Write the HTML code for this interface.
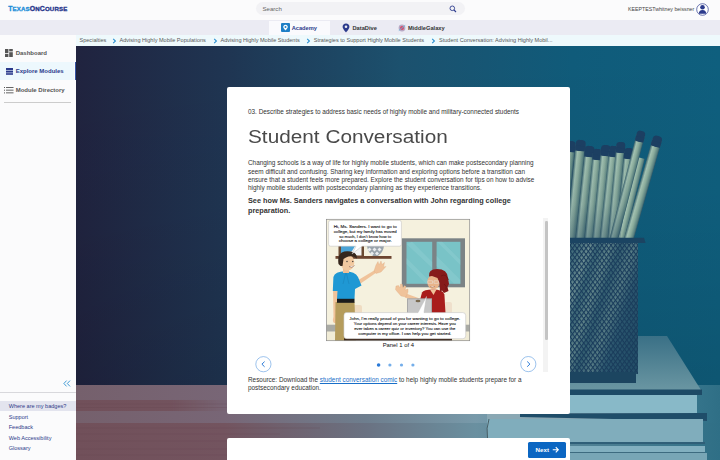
<!DOCTYPE html>
<html><head><meta charset="utf-8">
<style>
*{margin:0;padding:0;box-sizing:border-box}
html,body{width:720px;height:460px;overflow:hidden;background:#fff;font-family:"Liberation Sans",sans-serif}
.abs{position:absolute}
.t{position:absolute;white-space:nowrap}
#top{left:0;top:0;width:720px;height:20px;background:#fbfbfc}
#nav{left:0;top:20px;width:720px;height:15px;background:#ebebf3}
#side{left:0;top:35px;width:76px;height:425px;background:#fbfbfc}
#crumb{left:76px;top:35px;width:644px;height:10.8px;background:#eef9fc}
.card{background:#fff;border-radius:2px}
.bc{font-size:5.55px;color:#585858;line-height:8px;top:36.2px}
.chev{position:absolute;top:38.3px;width:3.2px;height:3.2px;border-right:1px solid #2a8fd0;border-top:1px solid #2a8fd0;transform:rotate(45deg)}
.sb{font-size:6px;font-weight:bold;color:#555;line-height:8px;left:15.7px}
.ft{font-size:5.55px;color:#2d3a8a;line-height:8px;left:8.7px}
.p{font-size:6.4px;color:#333;line-height:8.4px;left:248px}
</style></head><body>
<svg class="abs" style="left:0;top:0" width="720" height="460" viewBox="0 0 720 460">
<defs>
<linearGradient id="wall" x1="76" y1="0" x2="720" y2="0" gradientUnits="userSpaceOnUse">
<stop offset="0" stop-color="#20233f"/>
<stop offset="0.234" stop-color="#1f3552"/>
<stop offset="0.504" stop-color="#1c516e"/>
<stop offset="0.77" stop-color="#105b7a"/>
<stop offset="1" stop-color="#0f5f7e"/>
</linearGradient>
<linearGradient id="wallv" x1="0" y1="46" x2="0" y2="385" gradientUnits="userSpaceOnUse">
<stop offset="0" stop-color="#000" stop-opacity="0"/>
<stop offset="0.5" stop-color="#000" stop-opacity="0.03"/>
<stop offset="1" stop-color="#000" stop-opacity="0.1"/>
</linearGradient>
<linearGradient id="table" x1="76" y1="0" x2="720" y2="0" gradientUnits="userSpaceOnUse">
<stop offset="0" stop-color="#71505a"/>
<stop offset="0.23" stop-color="#73545f"/>
<stop offset="0.45" stop-color="#6a7282"/>
<stop offset="0.62" stop-color="#6a90a0"/>
<stop offset="1" stop-color="#2f6f86"/>
</linearGradient>
<linearGradient id="tableL" x1="76" y1="0" x2="720" y2="0" gradientUnits="userSpaceOnUse">
<stop offset="0" stop-color="#75606c"/>
<stop offset="0.23" stop-color="#786676"/>
<stop offset="0.45" stop-color="#6e7e8e"/>
<stop offset="0.62" stop-color="#789aaa"/>
<stop offset="0.8" stop-color="#4f8aa0"/>
<stop offset="1" stop-color="#2f6f86"/>
</linearGradient>

<linearGradient id="booktop" x1="0" y1="336" x2="0" y2="390" gradientUnits="userSpaceOnUse">
<stop offset="0" stop-color="#3a7086"/>
<stop offset="1" stop-color="#6a96a2"/>
</linearGradient>
</defs>
<rect x="76" y="46" width="644" height="340" fill="url(#wall)"/>
<rect x="76" y="46" width="644" height="340" fill="url(#wallv)"/>
<rect x="76" y="385" width="644" height="75" fill="url(#table)"/>
<rect x="76" y="385" width="644" height="15" fill="url(#tableL)"/>
<rect x="76" y="411" width="644" height="12" fill="url(#tableL)"/>
<linearGradient id="fadeL" x1="170" y1="0" x2="230" y2="0" gradientUnits="userSpaceOnUse"><stop offset="0" stop-color="#fff" stop-opacity="0"/><stop offset="1" stop-color="#fff" stop-opacity="1"/></linearGradient>
<mask id="mfade"><rect x="76" y="398" width="644" height="15" fill="url(#fadeL)"/></mask>
<rect x="76" y="399" width="644" height="13" fill="url(#tableL)" mask="url(#mfade)"/>
<g stroke="#5e3e4a" stroke-width="0.6" opacity="0.35">
<line x1="76" y1="404" x2="300" y2="404"/><line x1="76" y1="407.5" x2="260" y2="407.5"/>
<line x1="76" y1="428" x2="320" y2="428"/><line x1="76" y1="434" x2="280" y2="434"/><line x1="76" y1="441" x2="320" y2="441"/><line x1="76" y1="449" x2="300" y2="449"/><line x1="76" y1="455" x2="260" y2="455"/>
</g>
<!-- books -->
<polygon points="520,336 667,336 701,390 520,390" fill="url(#booktop)"/>
<rect x="520" y="389.5" width="182" height="5.5" fill="#1d4a66"/>
<rect x="520" y="395" width="177" height="18" fill="#88b9c8"/>
<rect x="487" y="413" width="220" height="8" fill="#8aa8b4"/><polygon points="520,413.4 707,413 707,421 520,417" fill="#1f4d69"/>
<rect x="487" y="419" width="216" height="23" fill="#80adbc"/><path d="M489 419 Q486 428 487.5 438" stroke="#3a4a50" stroke-width="0.8" fill="none"/>
<rect x="487" y="442" width="218" height="2" fill="#2f5f78"/>
<rect x="487" y="446" width="218" height="6" fill="#82b0c0"/><rect x="487" y="452" width="218" height="1" fill="#3d6b80"/><rect x="487" y="453" width="220" height="7" fill="#78a6b6"/>
<!-- pencils -->
<defs><linearGradient id="pen" x1="0" y1="0" x2="1" y2="0"><stop offset="0" stop-color="#3c646e"/><stop offset="0.25" stop-color="#a2c1b1"/><stop offset="0.55" stop-color="#8aab9b"/><stop offset="0.85" stop-color="#5b8280"/><stop offset="1" stop-color="#2f5868"/></linearGradient>
<linearGradient id="penshade" x1="0" y1="150" x2="0" y2="240" gradientUnits="userSpaceOnUse"><stop offset="0" stop-color="#1a3d5c" stop-opacity="0"/><stop offset="0.6" stop-color="#1a3d5c" stop-opacity="0.1"/><stop offset="1" stop-color="#1a3d5c" stop-opacity="0.35"/></linearGradient></defs>
<polygon points="560,150 633,150 620,240 560,240" fill="#234c66"/>
<g transform="translate(571,142) rotate(6.4)"><rect x="-5.0" y="3" width="10" height="99" fill="url(#pen)"/><rect x="-5.0" y="-1" width="10" height="11" rx="4.0" fill="#1c3f62"/><rect x="-5.0" y="5" width="10" height="5" fill="#1c3f62"/></g>
<g transform="translate(581,141) rotate(5.8)"><rect x="-5.0" y="3" width="10" height="100" fill="url(#pen)"/><rect x="-5.0" y="-1" width="10" height="11" rx="4.0" fill="#1c3f62"/><rect x="-5.0" y="5" width="10" height="5" fill="#1c3f62"/></g>
<g transform="translate(590,147) rotate(6.1)"><rect x="-4.75" y="3" width="9.5" height="94" fill="url(#pen)"/><rect x="-4.75" y="-1" width="9.5" height="11" rx="3.75" fill="#1c3f62"/><rect x="-4.75" y="5" width="9.5" height="5" fill="#1c3f62"/></g>
<g transform="translate(598,150) rotate(5.7)"><rect x="-4.75" y="3" width="9.5" height="90" fill="url(#pen)"/><rect x="-4.75" y="-1" width="9.5" height="11" rx="3.75" fill="#1c3f62"/><rect x="-4.75" y="5" width="9.5" height="5" fill="#1c3f62"/></g>
<g transform="translate(606,146) rotate(5.5)"><rect x="-4.75" y="3" width="9.5" height="94" fill="url(#pen)"/><rect x="-4.75" y="-1" width="9.5" height="11" rx="3.75" fill="#1c3f62"/><rect x="-4.75" y="5" width="9.5" height="5" fill="#1c3f62"/></g>
<g transform="translate(614,147) rotate(6.1)"><rect x="-4.5" y="3" width="9" height="94" fill="url(#pen)"/><rect x="-4.5" y="-1" width="9" height="11" rx="3.5" fill="#1c3f62"/><rect x="-4.5" y="5" width="9" height="5" fill="#1c3f62"/></g>
<g transform="translate(621,143) rotate(5.3)"><rect x="-4.5" y="3" width="9" height="97" fill="url(#pen)"/><rect x="-4.5" y="-1" width="9" height="11" rx="3.5" fill="#1c3f62"/><rect x="-4.5" y="5" width="9" height="5" fill="#1c3f62"/></g>
<g transform="translate(629,149) rotate(5.6)"><rect x="-4.5" y="3" width="9" height="91" fill="url(#pen)"/><rect x="-4.5" y="-1" width="9" height="11" rx="3.5" fill="#1c3f62"/><rect x="-4.5" y="5" width="9" height="5" fill="#1c3f62"/></g>
<g transform="translate(641,158) rotate(14)"><rect x="-4" y="0" width="8" height="82" fill="url(#pen)"/></g>
<g transform="translate(641.5,132) rotate(14.5)"><rect x="-4.25" y="3" width="8.5" height="110" fill="url(#pen)"/><rect x="-4.25" y="-1" width="8.5" height="11" rx="3.25" fill="#1c3f62"/><rect x="-4.25" y="5" width="8.5" height="5" fill="#1c3f62"/></g>
<g transform="translate(658,137) rotate(16.0)"><rect x="-4.75" y="3" width="9.5" height="105" fill="url(#pen)"/><rect x="-4.75" y="-1" width="9.5" height="11" rx="3.75" fill="#1c3f62"/><rect x="-4.75" y="5" width="9.5" height="5" fill="#1c3f62"/></g>
<polygon points="555,150 633,150 620,240 555,240" fill="url(#penshade)"/>
<!-- cup -->
<defs>
<linearGradient id="inside" x1="540" y1="290" x2="640" y2="325" gradientUnits="userSpaceOnUse">
<stop offset="0" stop-color="#3a6c7a"/>
<stop offset="0.2" stop-color="#5d8c90"/>
<stop offset="0.3" stop-color="#9cbcb0"/>
<stop offset="0.38" stop-color="#4d7e86"/>
<stop offset="0.48" stop-color="#8aaea4"/>
<stop offset="0.58" stop-color="#3f6f7c"/>
<stop offset="0.7" stop-color="#7aa09c"/>
<stop offset="0.82" stop-color="#36667a"/>
<stop offset="1" stop-color="#2a5a70"/>
</linearGradient>
<pattern id="mesh" width="3.2" height="3.2" patternUnits="userSpaceOnUse" patternTransform="scale(1,1.35) rotate(45)">
<path d="M0 0.5H3.2M0.5 0V3.2" stroke="#1a3d5c" stroke-width="1"/>
</pattern>
</defs>
<rect x="560" y="242" width="78" height="132" fill="url(#inside)"/>
<rect x="560" y="242" width="78" height="132" fill="url(#mesh)"/>
<rect x="560" y="242" width="78" height="132" fill="#1a3d5c" opacity="0.35"/>
<rect x="560" y="372" width="76" height="11" fill="#1c4560"/>
<polygon points="560,237.8 644,237.8 645.6,243 560,243" fill="#1b4462"/>
</svg>
<div id="top" class="abs"></div>
<div id="nav" class="abs"></div>
<div id="side" class="abs"></div>
<div id="crumb" class="abs"></div>
<!-- logo -->
<div class="t" style="left:8.2px;top:1.9px;line-height:8px;font-weight:bold;letter-spacing:0.15px;-webkit-text-stroke:0.3px currentColor">
<span style="color:#1a8cd8;-webkit-text-stroke-color:#1a8cd8;font-size:6.9px">T</span><span style="color:#1a8cd8;-webkit-text-stroke-color:#1a8cd8;font-size:6.1px">EXAS</span><span style="color:#24338a;-webkit-text-stroke-color:#24338a;font-size:6.9px">O</span><span style="color:#24338a;-webkit-text-stroke-color:#24338a;font-size:6.1px">N</span><span style="color:#24338a;-webkit-text-stroke-color:#24338a;font-size:6.9px">C</span><span style="color:#24338a;-webkit-text-stroke-color:#24338a;font-size:6.1px">OURSE</span>
</div>
<!-- search -->
<div class="abs" style="left:256px;top:2.3px;width:209px;height:13px;border-radius:6.5px;background:#f2f2f5"></div>
<div class="t" style="left:262.5px;top:5px;font-size:6.1px;line-height:8px;color:#666">Search</div>
<svg class="abs" style="left:449px;top:5px" width="8" height="8" viewBox="0 0 8 8"><circle cx="3.3" cy="3.3" r="2.3" fill="none" stroke="#2f3d8f" stroke-width="0.9"/><line x1="5" y1="5" x2="7" y2="7" stroke="#2f3d8f" stroke-width="1.1"/></svg>
<!-- user -->
<div class="t" style="left:628px;top:5.2px;font-size:5.25px;line-height:8px;color:#444">KEEPTESTwhitney beissner</div>
<svg class="abs" style="left:696px;top:3px" width="13" height="13" viewBox="0 0 13 13"><circle cx="6.5" cy="6.5" r="5.8" fill="#fff" stroke="#2b3a8c" stroke-width="0.7"/><circle cx="6.5" cy="4.3" r="2.3" fill="#2b3a8c"/><path d="M2.8 10.8 Q2.8 7 6.5 7 Q10.2 7 10.2 10.8 Z" fill="#2b3a8c"/></svg>
<!-- nav tabs -->
<div class="abs" style="left:268.6px;top:21.4px;width:61.2px;height:13.6px;background:#fafafd"></div>
<svg class="abs" style="left:281px;top:23px" width="9" height="9" viewBox="0 0 9 9"><rect width="9" height="9" rx="1" fill="#1f7fc6"/><path d="M4.5 1.8 C3 1.8 2.2 2.9 2.2 4 C2.2 5.3 4.5 7.4 4.5 7.4 C4.5 7.4 6.8 5.3 6.8 4 C6.8 2.9 6 1.8 4.5 1.8 Z" fill="#fff"/><circle cx="4.5" cy="4" r="1" fill="#1f7fc6"/></svg>
<div class="t" style="left:291.7px;top:23.5px;font-size:5.7px;font-weight:bold;line-height:8px;color:#2b3a8c">Academy</div>
<svg class="abs" style="left:342px;top:22.5px" width="8" height="10" viewBox="0 0 8 10"><path d="M4 0.5 C1.9 0.5 0.6 2 0.6 3.8 C0.6 6 4 9.5 4 9.5 C4 9.5 7.4 6 7.4 3.8 C7.4 2 6.1 0.5 4 0.5 Z" fill="#2b3a8c"/><circle cx="4" cy="3.8" r="1.3" fill="#ebebf3"/></svg>
<div class="t" style="left:352.5px;top:23.5px;font-size:5.7px;font-weight:bold;line-height:8px;color:#333">DataDive</div>
<svg class="abs" style="left:398px;top:23.5px" width="8" height="8" viewBox="0 0 8 8"><circle cx="4" cy="4" r="3.4" fill="#b9a9c4"/><circle cx="4" cy="4" r="2" fill="#d84a6a"/><path d="M0.8 6.5 L7.2 1.5" stroke="#5ab8e0" stroke-width="0.8"/></svg>
<div class="t" style="left:408px;top:23.5px;font-size:5.7px;font-weight:bold;line-height:8px;color:#333">MiddleGalaxy</div>
<!-- breadcrumbs -->
<div class="t bc" style="left:79.5px">Specialties</div>
<svg class="abs" style="left:112.0px;top:38px" width="5" height="6" viewBox="0 0 5 6"><path d="M1.2 0.9 L3.4 3 L1.2 5.1" fill="none" stroke="#2a8fd0" stroke-width="1.1"/></svg>
<div class="t bc" style="left:119.5px">Advising Highly Mobile Populations</div>
<svg class="abs" style="left:212.5px;top:38px" width="5" height="6" viewBox="0 0 5 6"><path d="M1.2 0.9 L3.4 3 L1.2 5.1" fill="none" stroke="#2a8fd0" stroke-width="1.1"/></svg>
<div class="t bc" style="left:220.5px">Advising Highly Mobile Students</div>
<svg class="abs" style="left:306.0px;top:38px" width="5" height="6" viewBox="0 0 5 6"><path d="M1.2 0.9 L3.4 3 L1.2 5.1" fill="none" stroke="#2a8fd0" stroke-width="1.1"/></svg>
<div class="t bc" style="left:313.75px">Strategies to Support Highly Mobile Students</div>
<svg class="abs" style="left:431.0px;top:38px" width="5" height="6" viewBox="0 0 5 6"><path d="M1.2 0.9 L3.4 3 L1.2 5.1" fill="none" stroke="#2a8fd0" stroke-width="1.1"/></svg>
<div class="t bc" style="left:439px">Student Conversation: Advising Highly Mobil...</div>
<!-- sidebar -->
<div class="abs" style="left:0;top:62px;width:74px;height:18.2px;background:#edf8fd"></div>
<div class="abs" style="left:75px;top:62px;width:1.2px;height:18.2px;background:#3656a6"></div>
<svg class="abs" style="left:5px;top:49px" width="8" height="8" viewBox="0 0 8 8"><g fill="#555"><rect x="0" y="0" width="3.4" height="4.2"/><rect x="4.2" y="0" width="3.6" height="2.4"/><rect x="0" y="5" width="3.4" height="3"/><rect x="4.2" y="3.2" width="3.6" height="4.8"/></g></svg>
<div class="t sb" style="top:49px">Dashboard</div>
<svg class="abs" style="left:5.5px;top:68px" width="8" height="7" viewBox="0 0 8 7"><g fill="#2b3a8c"><rect x="0" y="0" width="7" height="2"/><rect x="0" y="2.6" width="7" height="2"/><rect x="0" y="5.2" width="7" height="1.6"/></g></svg>
<div class="t sb" style="top:67.3px;color:#2b3a8c">Explore Modules</div>
<svg class="abs" style="left:4px;top:86.5px" width="10" height="7" viewBox="0 0 10 7"><g fill="#555"><rect x="0" y="0" width="1" height="1"/><rect x="2" y="0" width="7.5" height="0.9"/><rect x="0" y="2.7" width="1" height="1"/><rect x="2" y="2.7" width="7.5" height="0.9"/><rect x="0" y="5.4" width="1" height="1"/><rect x="2" y="5.4" width="7.5" height="0.9"/></g></svg>
<div class="t sb" style="top:85.6px">Module Directory</div>
<div class="abs" style="left:4.3px;top:102px;width:66.7px;height:0.6px;background:#ccc"></div>
<svg class="abs" style="left:62.5px;top:379.5px" width="8" height="7" viewBox="0 0 8 7"><path d="M3.6 0.6 L0.9 3.5 L3.6 6.4 M7 0.6 L4.3 3.5 L7 6.4" fill="none" stroke="#2a8fd0" stroke-width="0.9"/></svg>
<div class="abs" style="left:0;top:392.3px;width:76px;height:0.6px;background:#d8d8dc"></div>
<div class="abs" style="left:0;top:400.6px;width:76px;height:10px;background:#e3e4ee"></div>
<div class="t ft" style="top:401.6px">Where are my badges?</div>
<div class="t ft" style="top:412.5px">Support</div>
<div class="t ft" style="top:423px">Feedback</div>
<div class="t ft" style="top:433.6px">Web Accessibility</div>
<div class="t ft" style="top:444.3px">Glossary</div>
<div class="abs card" style="left:227px;top:86.5px;width:343px;height:327px"></div>
<div class="abs card" style="left:227px;top:438px;width:343px;height:30px"></div>
<div class="t" style="left:248px;top:107.8px;font-size:6.4px;line-height:8px;color:#333">03. Describe strategies to address basic needs of highly mobile and military-connected students</div>
<div class="t" style="left:247.6px;top:124.7px;font-size:17.5px;line-height:24px;color:#4a4a4a;transform:scaleX(1.187);transform-origin:0 0">Student Conversation</div>
<div class="t p" style="top:158.9px">Changing schools is a way of life for highly mobile students, which can make postsecondary planning</div>
<div class="t p" style="top:167.6px">seem difficult and confusing. Sharing key information and exploring options before a transition can</div>
<div class="t p" style="top:175.5px">ensure that a student feels more prepared. Explore the student conversation for tips on how to advise</div>
<div class="t p" style="top:183.8px">highly mobile students with postsecondary planning as they experience transitions.</div>
<div class="t" style="left:248px;top:195.9px;font-size:7.3px;font-weight:bold;line-height:9.7px;color:#333">See how Ms. Sanders navigates a conversation with John regarding college</div>
<div class="t" style="left:248px;top:205.6px;font-size:7.3px;font-weight:bold;line-height:9.7px;color:#333">preparation.</div>
<!-- scrollbar -->
<div class="abs" style="left:543.4px;top:218px;width:5px;height:153.5px;background:#f3f3f3"></div>
<div class="abs" style="left:545px;top:220.6px;width:2.7px;height:119px;background:#c4c4c4;border-radius:1.3px"></div>
<!-- carousel controls -->
<svg class="abs" style="left:255px;top:355.8px" width="17" height="17" viewBox="0 0 17 17"><circle cx="8.4" cy="8.2" r="7.6" fill="#fff" stroke="#5a9ae0" stroke-width="0.6"/><path d="M9.6 5.6 L6.9 8.2 L9.6 10.8" fill="none" stroke="#2a7ad8" stroke-width="1"/></svg>
<svg class="abs" style="left:519.5px;top:355.8px" width="17" height="17" viewBox="0 0 17 17"><circle cx="8.3" cy="8.1" r="7.6" fill="#fff" stroke="#5a9ae0" stroke-width="0.6"/><path d="M7.2 5.5 L9.9 8.1 L7.2 10.7" fill="none" stroke="#2a7ad8" stroke-width="1"/></svg>
<svg class="abs" style="left:370px;top:360px" width="50" height="10" viewBox="0 0 50 10"><circle cx="8.6" cy="5" r="1.8" fill="#2a7ad8"/><circle cx="19.9" cy="5" r="1.6" fill="#74aeea"/><circle cx="31.5" cy="5" r="1.6" fill="#74aeea"/><circle cx="42.9" cy="5" r="1.6" fill="#74aeea"/></svg>
<div class="t" style="left:382.7px;top:341.4px;font-size:5.86px;line-height:8px;color:#111">Panel 1 of 4</div>
<div class="t p" style="top:375.9px">Resource: Download the <span style="color:#1a6fc8;text-decoration:underline">student conversation comic</span> to help highly mobile students prepare for a</div>
<div class="t p" style="top:384.1px">postsecondary education.</div>
<!-- next button -->
<div class="abs" style="left:528.2px;top:442px;width:38px;height:15.6px;background:#0b66c2;border-radius:1.5px"></div>
<div class="t" style="left:535.6px;top:445.8px;font-size:6.2px;font-weight:bold;line-height:8px;color:#fff">Next</div>
<svg class="abs" style="left:552px;top:446px" width="7.5" height="7.5" viewBox="0 0 8 8"><path d="M0.8 4 H6.6 M4 1.3 L6.7 4 L4 6.7" fill="none" stroke="#fff" stroke-width="1.2"/></svg>
<svg class="abs" style="left:0;top:0" width="720" height="460" viewBox="0 0 720 460">
<defs><clipPath id="cc"><rect x="326.5" y="219.3" width="143.2" height="121.4"/></clipPath></defs>
<g clip-path="url(#cc)">
<rect x="326" y="219" width="144" height="122" fill="#f5f1de"/>
<!-- wainscot -->
<rect x="326" y="324.7" width="144" height="7" fill="#a9aaa4"/>
<rect x="326" y="331.7" width="144" height="10" fill="#f1ecd6"/>
<!-- window -->
<rect x="401.8" y="238.3" width="63.2" height="49" fill="#7b8386"/>
<rect x="406.5" y="241.8" width="25.7" height="42" fill="#79c3c7"/>
<rect x="436.6" y="241.8" width="23.8" height="42" fill="#79c3c7"/>
<path d="M412 241.8 L432.2 262 L432.2 268 L406.5 244 Z M406.5 258 L432.2 283.8 L426 283.8 L406.5 264 Z M442 241.8 L460.4 260 L460.4 265 L437 241.8 Z M436.6 256 L460.4 280 L460.4 283.8 L454 283.8 L436.6 266 Z" fill="#9ad4d6" opacity="0.3"/>
<!-- shelf items -->
<rect x="338.5" y="243" width="25.5" height="13" fill="#6b4a32"/>
<rect x="341" y="244.5" width="20.5" height="11" fill="#f4f4f4"/>
<path d="M341 244.5 H356 L352 251 L341 255.5 Z" fill="#4aa3d6"/>
<path d="M367 246 Q375 244 384 246 Q383 254 375.5 257 Q368 254 367 246 Z" fill="#9aa4ac"/>
<path d="M369.5 247.5 l2 2 l-2 2 l-2 -2z M374.5 247.5 l2 2 l-2 2 l-2 -2z M379.5 247.5 l2 2 l-2 2 l-2 -2z M372 251.5 l2 2 l-2 2 l-2 -2z M377 251.5 l2 2 l-2 2 l-2 -2z" fill="#e9ecee"/>
<rect x="335.5" y="256" width="56" height="2.8" fill="#6d4530"/>
<!-- chairs -->
<rect x="352" y="305" width="10" height="11" rx="2" fill="#efdcc2"/>
<rect x="444" y="302" width="8" height="12" rx="2" fill="#efe0cc"/>
<!-- man -->
<path d="M355 282 L375 270 L376.5 272.5 L357 286 Z" fill="#f0c39a"/>
<path d="M374 271 L376 265 L378 261.5 L379 265 L381 261 L382 264.5 L384.5 262.5 L383.5 267 L386 266.5 L381 272 L376 273.5 Z" fill="#f0c39a" stroke="#d9a47a" stroke-width="0.3"/>
<path d="M333 288 L338.5 288 L338 318 L333.5 318 Z" fill="#f0c39a"/>
<ellipse cx="335.5" cy="320" rx="2.6" ry="3.3" fill="#f0c39a"/>
<path d="M335.5 302 L354.5 302 L356 342 L335 342 Z" fill="#b59c5c"/>
<path d="M333.4 277 Q335 271.4 345 271.2 Q355 271.4 358 277 L361.5 285.5 L355 289 L354.5 299 L337 299 L337.5 291 L332.8 291 Z" fill="#1f98d4"/>
<path d="M343 284 L346 271.5 L349 284" fill="none" stroke="#1679ad" stroke-width="0.4"/>
<rect x="337" y="298.8" width="17.5" height="4" fill="#1b1b1b"/>
<rect x="343" y="266" width="6" height="7" fill="#eebf95"/>
<ellipse cx="347.5" cy="262.5" rx="6.8" ry="8" fill="#f2c9a0"/>
<path d="M338.5 264 Q336.5 251 347.5 251.2 Q357.5 251.3 356.8 258.5 L354 256.8 Q350 255.5 346 257.5 L343.5 259 L342.5 266 L340.5 266 Z" fill="#35261c"/>
<path d="M349 266.5 Q352 268.5 354.5 265.5" fill="#fff" stroke="#6a3426" stroke-width="0.5"/>
<ellipse cx="347" cy="261.5" rx="0.6" ry="0.8" fill="#222"/><ellipse cx="352.8" cy="261.5" rx="0.6" ry="0.8" fill="#222"/>
<!-- woman -->
<path d="M406 293.5 L421 299 L421.5 303.5 L405 297.5 Z" fill="#f0c39a"/>
<path d="M396 286 L398.5 285.5 L400 288 L400.5 284 L402.5 284.5 L403 288 L404.5 285.5 L406 286.5 L405 290 L408 289 L408 292 L406 297 L401 296 L397.5 292 L395.5 289.5 Z" fill="#f0c39a" stroke="#d9a47a" stroke-width="0.3"/>
<path d="M422 292.5 Q423.5 289.4 433 289.4 Q443 289.4 444.4 294.5 L445.5 313 L418 313 L420 300 Z" fill="#a91d1c"/>
<path d="M430 289.6 L433.5 295 L436.5 289.6 Z" fill="#f0c39a"/>
<ellipse cx="433.5" cy="282" rx="6.2" ry="7.3" fill="#e8b48a"/>
<path d="M429 276.5 Q428 269 437 268.9 Q447.5 268.9 448 278 L449 284 L447.5 287 L448.5 291 L444 293 L442 290.5 L440 292 L439.5 283 L437.5 278 L432 276 Z" fill="#861b1a"/>
<path d="M441 276 Q446 273 448.5 280 M444 284 Q447.5 286 446 290" fill="none" stroke="#5e1010" stroke-width="0.5"/>
<path d="M427.8 280.8 H432.6 V283.3 H427.8 Z M434 280.8 H438.4 V283.3 H434 Z" fill="none" stroke="#e8e8e8" stroke-width="0.5"/>
<path d="M430 286.6 Q432.5 288 435 286.4" fill="#fff" stroke="#7a3a2a" stroke-width="0.4"/>
<rect x="407" y="298.3" width="25" height="15" fill="#a9a9a9"/>
<rect x="408" y="299.3" width="23" height="13.5" fill="#c7c7c7"/>
<ellipse cx="418" cy="301" rx="2.5" ry="1.2" fill="#7a6a50"/>
<!-- desk -->
<rect x="344" y="338.3" width="108" height="2.6" fill="#3a2418"/>
<!-- top bubble -->
<path d="M330.6 220.4 H399.4 Q401.4 220.4 401.4 222.4 V244.2 Q401.4 246.2 399.4 246.2 H362 L352 254 L356 246.2 H330.6 Q328.6 246.2 328.6 244.2 V222.4 Q328.6 220.4 330.6 220.4 Z" fill="#fff" stroke="#bdbdbd" stroke-width="0.5"/>
<!-- bottom bubble -->
<path d="M346.4 312.6 H418 L426.5 296.5 L424 312.6 H462.8 Q465.7 312.6 465.7 315.5 V335.8 Q465.7 338.7 462.8 338.7 H346.8 Q343.9 338.7 343.9 335.8 V315.5 Q343.9 312.6 346.4 312.6 Z" fill="#fff" stroke="#bdbdbd" stroke-width="0.5"/>
<g font-family="Liberation Sans" font-size="4.3" fill="#111" stroke="#111" stroke-width="0.1" text-anchor="middle">
<text x="365.2" y="227.9" textLength="63" lengthAdjust="spacingAndGlyphs">Hi, Ms. Sanders. I want to go to</text>
<text x="365.2" y="232.7" textLength="63" lengthAdjust="spacingAndGlyphs">college, but my family has moved</text>
<text x="365.2" y="237.5" textLength="52" lengthAdjust="spacingAndGlyphs">so much, I don't know how to</text>
<text x="365.2" y="242.4" textLength="53" lengthAdjust="spacingAndGlyphs">choose a college or major.</text>
<text x="404.8" y="319.9" textLength="111" lengthAdjust="spacingAndGlyphs">John, I'm really proud of you for wanting to go to college.</text>
<text x="404.8" y="324.7" textLength="102" lengthAdjust="spacingAndGlyphs">Your options depend on your career interests. Have you</text>
<text x="404.8" y="329.7" textLength="101" lengthAdjust="spacingAndGlyphs">ever taken a career quiz or inventory? You can use the</text>
<text x="404.8" y="334.5" textLength="93" lengthAdjust="spacingAndGlyphs">computer in my office. I can help you get started.</text>
</g>
</g>
<rect x="326.5" y="219.3" width="143.2" height="121.4" fill="none" stroke="#8a8a8a" stroke-width="0.7"/>
</svg>
</body></html>
